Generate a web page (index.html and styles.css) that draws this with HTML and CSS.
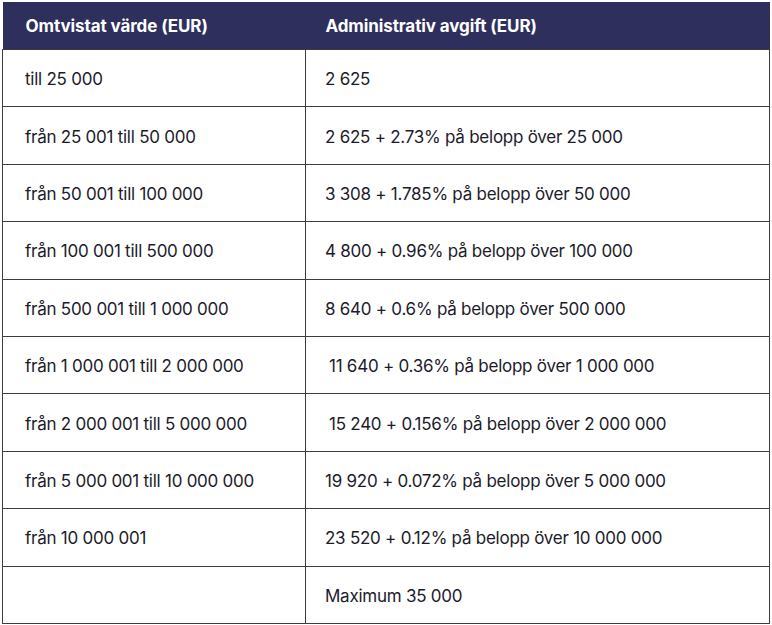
FILE: index.html
```html
<!DOCTYPE html>
<html lang="sv">
<head>
<meta charset="utf-8">
<link rel="stylesheet" href="styles.css">
</head>
<body>
<table class="fees">
  <thead>
    <tr><th class="c1">Omtvistat värde (EUR)</th><th class="c2">Administrativ avgift (EUR)</th></tr>
  </thead>
  <tbody>
    <tr><td>till 25 000</td><td>2 625</td></tr>
    <tr><td>från 25 001 till 50 000</td><td>2 625 + 2.73% på belopp över 25 000</td></tr>
    <tr><td>från 50 001 till 100 000</td><td>3 308 + 1.785% på belopp över 50 000</td></tr>
    <tr><td>från 100 001 till 500 000</td><td>4 800 + 0.96% på belopp över 100 000</td></tr>
    <tr><td>från 500 001 till 1 000 000</td><td>8 640 + 0.6% på belopp över 500 000</td></tr>
    <tr><td>från 1 000 001 till 2 000 000</td><td><span class="lead">11 640 + 0.36% på belopp över 1 000 000</span></td></tr>
    <tr><td>från 2 000 001 till 5 000 000</td><td><span class="lead">15 240 + 0.156% på belopp över 2 000 000</span></td></tr>
    <tr><td>från 5 000 001 till 10 000 000</td><td>19 920 + 0.072% på belopp över 5 000 000</td></tr>
    <tr><td>från 10 000 001</td><td>23 520 + 0.12% på belopp över 10 000 000</td></tr>
    <tr><td></td><td>Maximum 35 000</td></tr>
  </tbody>
</table>
</body>
</html>
```
FILE: styles.css
```css
html, body {
  margin: 0;
  padding: 0;
  background: #ffffff;
}
body {
  padding: 2px 0 0 2px;
  font-family: Inter, "Noto Sans", sans-serif;
}
.fees {
  border-collapse: collapse;
  width: 768px;
  table-layout: fixed;
  color: #1c1b2b;
}
.fees th {
  background: #2e2f5d;
  color: #ffffff;
  font-weight: 700;
  font-size: 17px;
  letter-spacing: -0.1px;
  text-align: left;
  height: 47px;
  padding: 0 0 0 23px;
  vertical-align: middle;
}
.fees .c1 { width: 280px; }
.fees th.c2 { padding-left: 20px; }
.fees td {
  border: 1px solid #3d3d3d;
  font-size: 17px;
  letter-spacing: -0.25px;
  height: 57.4px;
  padding: 2px 0 0 22px;
  vertical-align: middle;
  box-sizing: border-box;
}
.fees td + td { padding-left: 19px; }
.fees td:first-child { width: 303px; }
.lead { padding-left: 4px; }
```
